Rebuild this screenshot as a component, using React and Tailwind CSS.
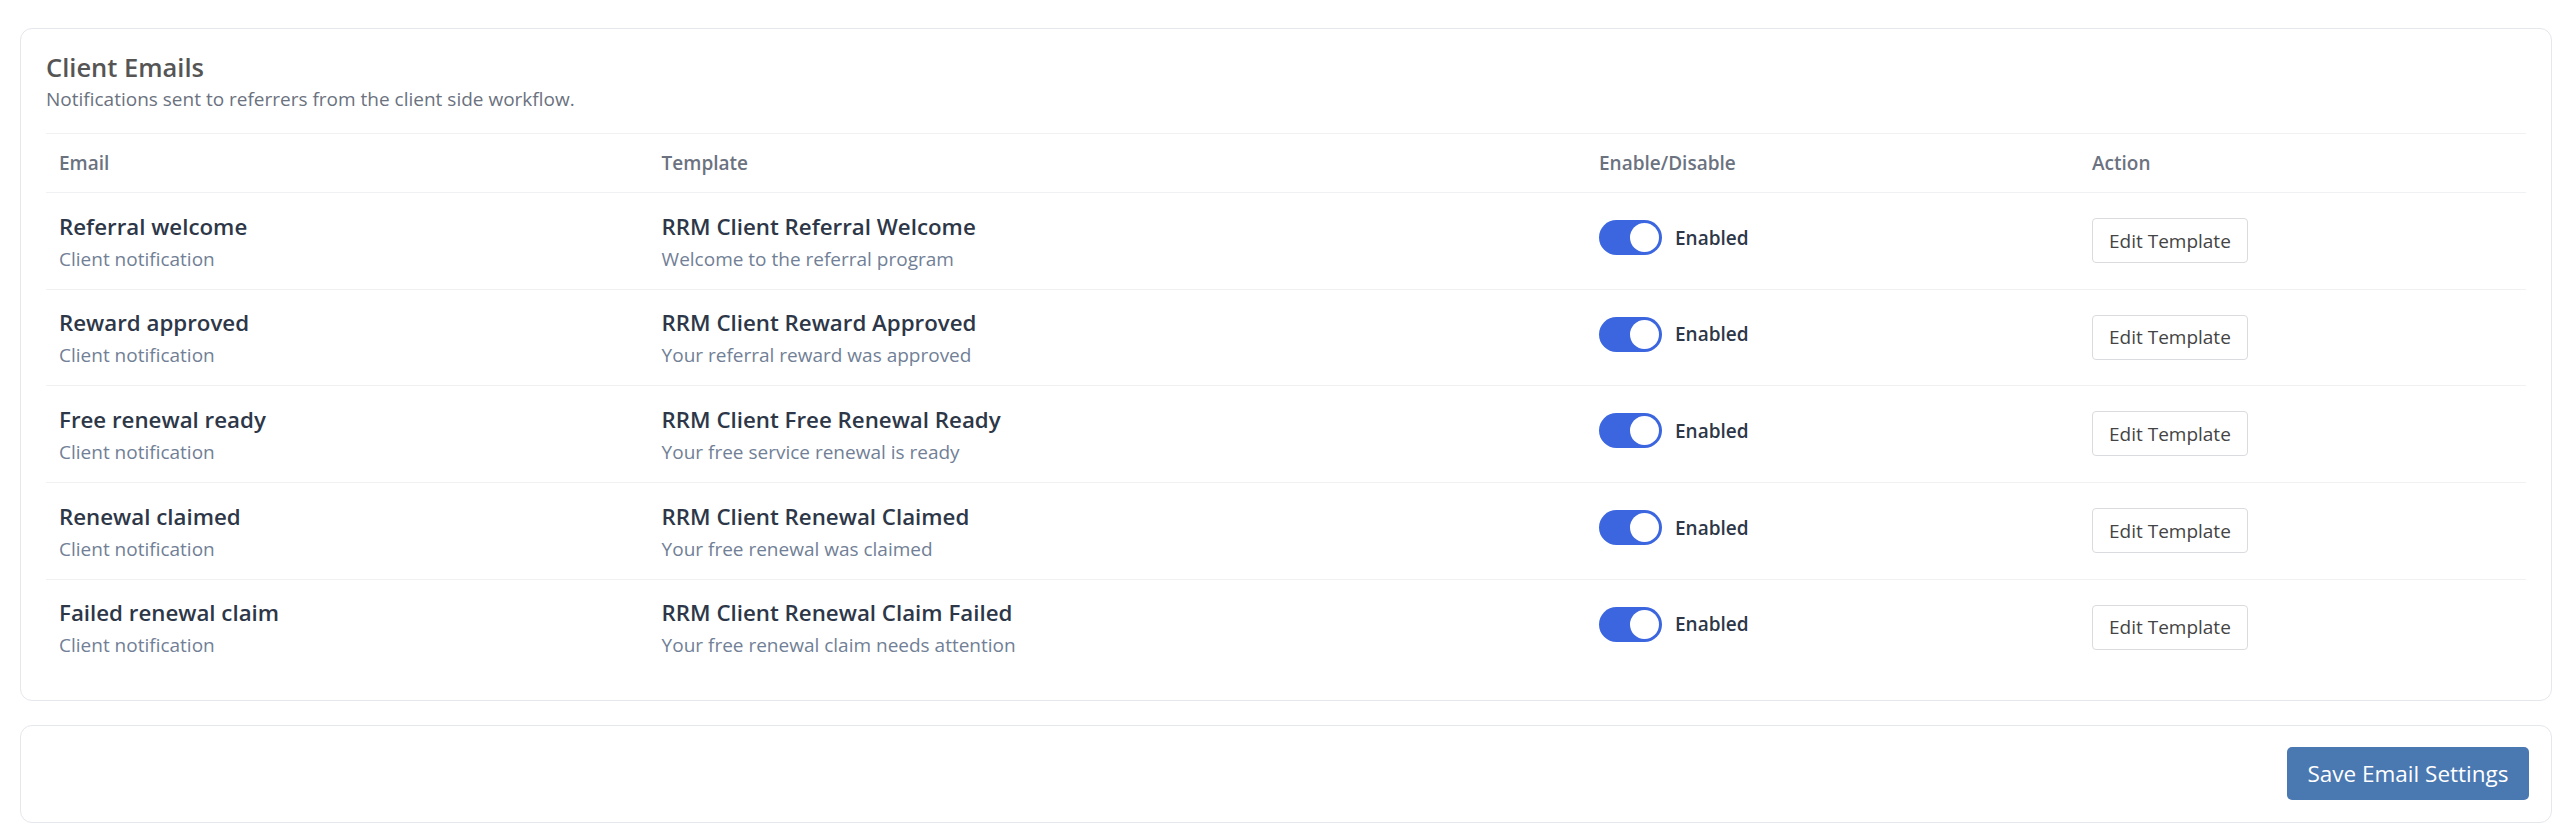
import React from "react";

const rows = [
  {
    email: "Referral welcome",
    template: "RRM Client Referral Welcome",
    subject: "Welcome to the referral program",
  },
  {
    email: "Reward approved",
    template: "RRM Client Reward Approved",
    subject: "Your referral reward was approved",
  },
  {
    email: "Free renewal ready",
    template: "RRM Client Free Renewal Ready",
    subject: "Your free service renewal is ready",
  },
  {
    email: "Renewal claimed",
    template: "RRM Client Renewal Claimed",
    subject: "Your free renewal was claimed",
  },
  {
    email: "Failed renewal claim",
    template: "RRM Client Renewal Claim Failed",
    subject: "Your free renewal claim needs attention",
  },
];

const cols = "grid grid-cols-[602.6px_937.4px_493px_1fr] items-start";

const Toggle = () => (
  <div className="flex items-center gap-[13px]">
    <span className="relative block w-[63px] h-[35px] rounded-full bg-[#3b66df]">
      <span className="absolute right-[3px] top-[3px] w-[29px] h-[29px] rounded-full bg-white" />
    </span>
    <span className="text-[19px] leading-[28px] font-semibold text-[#2d3748]">
      Enabled
    </span>
  </div>
);

export default function App() {
  return (
    <div className="min-h-screen bg-white pt-[28px] pl-[20px] font-['Open_Sans',sans-serif]">
      <div className="w-[2532px]">
        <section className="border border-[#e4e7ec] rounded-[12px] px-[25px] pt-[21px] pb-[25px]">
          <h2 className="text-[25.5px] leading-[34px] font-semibold text-[#555555]">
            Client Emails
          </h2>
          <p className="mt-[1px] text-[19px] leading-[28px] text-[#6b7280]">
            Notifications sent to referrers from the client side workflow.
          </p>

          <div className="mt-[20px] border-t border-[#f0f1f3]">
            <div className={`${cols} py-[15px]`}>
              {["Email", "Template", "Enable/Disable", "Action"].map((h) => (
                <div
                  key={h}
                  className="pl-[13px] text-[19px] leading-[28px] font-semibold text-[#6b7280]"
                >
                  {h}
                </div>
              ))}
            </div>

            {rows.map((r) => (
              <div key={r.email} className={`${cols} border-t border-[#f0f1f3]`}>
                <div className="pl-[13px] pt-[18.5px] pb-[16.2px]">
                  <div className="text-[22.3px] leading-[30px] font-semibold text-[#2d3748]">
                    {r.email}
                  </div>
                  <div className="mt-[3px] text-[19px] leading-[28px] text-[#718096]">
                    Client notification
                  </div>
                </div>
                <div className="pl-[13px] pt-[18.5px]">
                  <div className="text-[22.3px] leading-[30px] font-semibold text-[#2d3748]">
                    {r.template}
                  </div>
                  <div className="mt-[3px] text-[19px] leading-[28px] text-[#718096]">
                    {r.subject}
                  </div>
                </div>
                <div className="pl-[13px] pt-[27px]">
                  <Toggle />
                </div>
                <div className="pl-[13px] pt-[25px]">
                  <button className="h-[45px] px-[16px] border border-[#d9dbde] rounded-[4px] bg-white text-[19px] leading-[28px] text-[#444444]">
                    Edit Template
                  </button>
                </div>
              </div>
            ))}
          </div>
        </section>

        <section className="mt-[23.5px] border border-[#e4e7ec] rounded-[12px] pt-[21.5px] pb-[22px] pr-[22.5px] flex justify-end">
          <button className="h-[52.6px] px-[20px] rounded-[5px] bg-[#4a78b1] text-white text-[22.5px] leading-[32px]">
            Save Email Settings
          </button>
        </section>
      </div>
    </div>
  );
}
